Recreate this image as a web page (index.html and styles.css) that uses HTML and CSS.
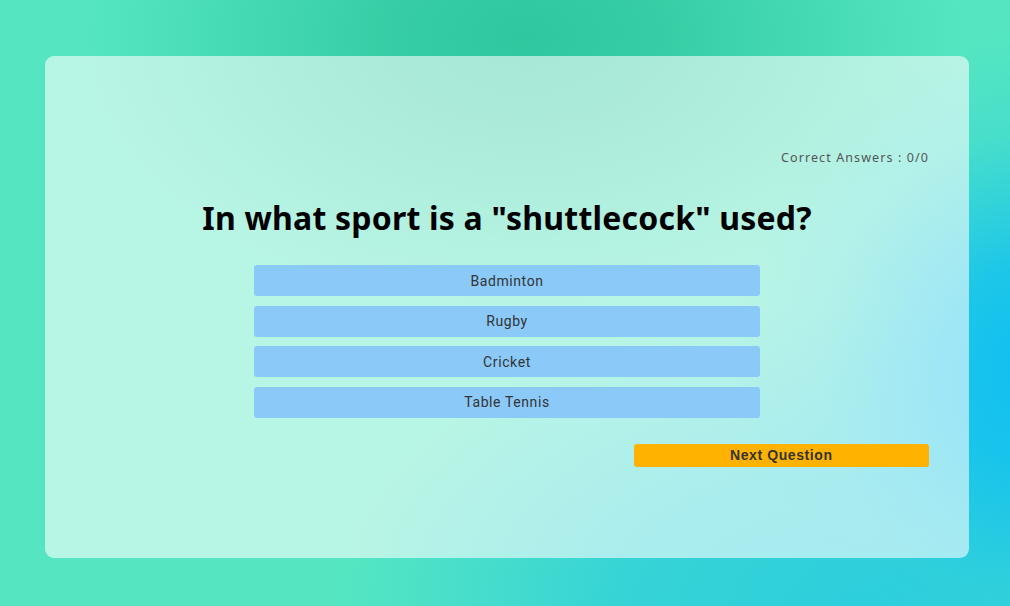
FILE: index.html
```html
<!DOCTYPE html>
<html lang="en">
<head>
<meta charset="utf-8">
<title>Quiz</title>
<link rel="stylesheet" href="styles.css">
</head>
<body>
  <main class="card">
    <div class="score">Correct Answers : 0/0</div>
    <h1 class="question">In what sport is a "shuttlecock" used?</h1>
    <div class="options">
      <button class="option">Badminton</button>
      <button class="option">Rugby</button>
      <button class="option">Cricket</button>
      <button class="option">Table Tennis</button>
    </div>
    <div class="actions">
      <button class="next">Next Question</button>
    </div>
  </main>
</body>
</html>
```
FILE: styles.css
```css
html, body {
  margin: 0;
  height: 100%;
}
body {
  background:
    radial-gradient(ellipse 440px 270px at 52% 6%, #2ec79e 0%, rgba(46,199,158,0.8) 30%, rgba(85,230,193,0) 100%),
    radial-gradient(ellipse 300px 330px at 102% 60%, #10bff2 0%, rgba(16,191,242,0.8) 30%, rgba(40,205,225,0.3) 70%, rgba(85,230,193,0) 100%),
    radial-gradient(ellipse 520px 300px at 85% 100%, #2ecfdc 0%, rgba(46,207,220,0.8) 45%, rgba(85,230,193,0) 100%),
    #55e6c1;
  font-family: "Noto Sans", "Open Sans", sans-serif;
  overflow: hidden;
}
.card {
  box-sizing: border-box;
  width: 924px;
  height: 502px;
  margin: 0 0 0 45px;
  position: relative;
  top: 56px;
  padding: 92px 40px 40px;
  border-radius: 9px;
  background: rgba(255, 255, 255, 0.58);
  display: flex;
  flex-direction: column;
}
.score {
  text-align: right;
  font-size: 12.5px;
  line-height: 20px;
  letter-spacing: 1.1px;
  color: #555;
}
.question {
  margin: 30px 0 0;
  text-align: center;
  font-size: 32px;
  line-height: 40px;
  font-weight: 700;
  color: #000;
  letter-spacing: 0.2px;
}
.options {
  margin: 27px auto 0;
  width: 60%;
  display: flex;
  flex-direction: column;
  gap: 9.67px;
}
.option {
  height: 31px;
  border: none;
  border-radius: 3px;
  background: #8bc9f9;
  color: #333;
  font-family: Roboto, "Liberation Sans", sans-serif;
  font-size: 14px;
  letter-spacing: 0.6px;
  padding: 0;
  cursor: pointer;
}
.actions {
  margin-top: 26px;
  display: flex;
  justify-content: flex-end;
}
.next {
  width: 35%;
  height: 23px;
  border: none;
  border-radius: 3px;
  background: #ffb300;
  color: #333;
  font-family: "Liberation Sans", Arial, sans-serif;
  font-weight: 700;
  font-size: 14px;
  letter-spacing: 0.6px;
  padding: 0;
  cursor: pointer;
}
```
